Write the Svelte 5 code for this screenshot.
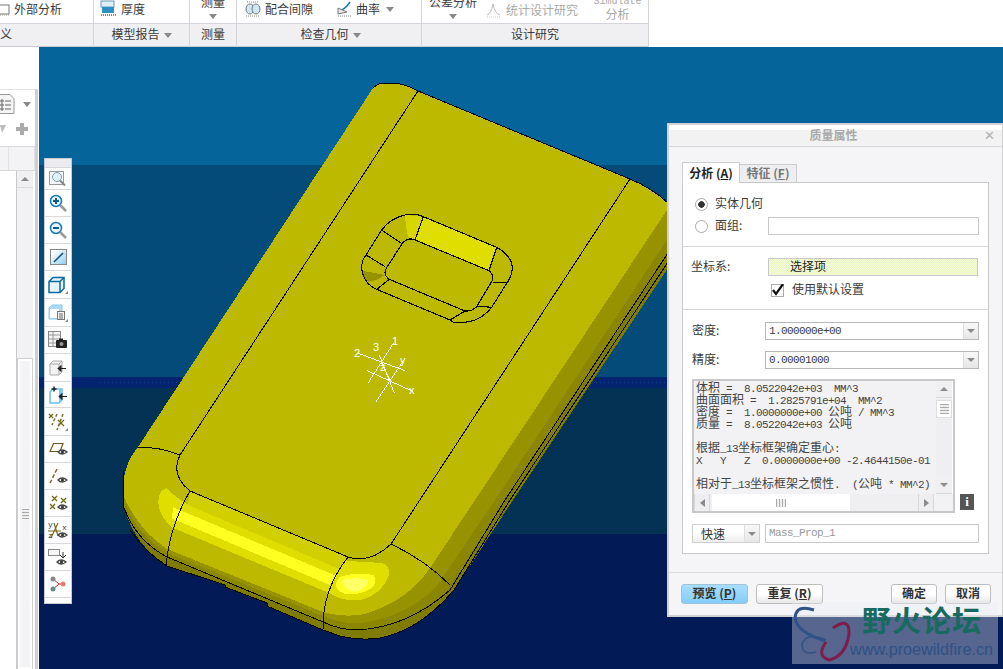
<script>
  // model outline pieces, in page coordinates (the svg viewBox starts at 39,47)
  const top = 'M373 88 Q378 83 385 83 L395 83 Q408 85 418 91 L630 179 Q652 188 668 203 L700 210';
  const back = 'L123 490 Q123 465 138 447 Z';

  const silhouette = `${top} L700 220 L513 500 L454 590 Q420 630 380 638 Q360 641 340 636 L323 630 L267 606 L267 603 L225 587 L225 585 L167 566 Q135 545 125 510 ${back}`;
  const shade1 = `${top} L700 203 L505 500 L448 590 Q410 625 358 630 Q340 630 323 622 L167 557 Q135 540 123 505 ${back}`;
  const shade2 = `${top} L700 190 L495 500 L437 586 Q405 618 360 623 Q340 624 323 616 L167 553 Q135 532 123 500 ${back}`;
  const face = `${top} L700 160 L432 565 Q410 600 365 614 Q345 618 323 612 L167 549 Q138 530 123 495 ${back}`;

  const edges = [
    'M373 88 Q378 83 385 83 L395 83 Q408 85 418 91 L630 179 Q652 188 668 203',
    'M418 91 L180 455 Q170 475 190 491 L348 557 Q370 564 391 544 L630 179',
    'M138 447 Q160 447 180 455',
    'M190 491 Q170 525 166 565',
    'M348 557 Q322 590 323 630',
    'M391 544 Q425 560 450 585',
    'M668 253 L505 500 L450 590 Q408 627 358 630 Q340 630 323 622 L167 557 Q135 540 123 505 L123 470',
    'M668 262 L510 500 L454 590 Q420 630 380 638 Q360 641 340 636 L323 630 L267 606 L267 603 L225 587 L225 585 L167 566 Q145 552 130 530'
  ];

  const results = [
    [['cn', '体积'], ['la', ' =  8.0522042e+03  MM^3']],
    [['cn', '曲面面积'], ['la', ' =  1.2825791e+04  MM^2']],
    [['cn', '密度'], ['la', ' =  1.0000000e+00 '], ['cn', '公吨'], ['la', ' / MM^3']],
    [['cn', '质量'], ['la', ' =  8.0522042e+03 '], ['cn', '公吨']],
    [],
    [['cn', '根据'], ['la', '_13'], ['cn', '坐标框架确定重心'], ['la', ':']],
    [['la', 'X   Y   Z  0.0000000e+00 -2.4644150e-01']],
    [],
    [['cn', '相对于'], ['la', '_13'], ['cn', '坐标框架之惯性'], ['la', '.  ('], ['cn', '公吨'], ['la', ' * MM^2)']]
  ];
</script>

<div class="app">
  <header class="ribbon">
    <div class="group">
      <div class="tools g1">
        <svg class="ic" width="12" height="16" viewBox="0 0 12 16"><rect x="-3" y="4" width="12" height="9" fill="#fff" stroke="#777"/><path d="M0 14h10" stroke="#999" stroke-dasharray="1 1"/></svg>
        <span>外部分析</span>
      </div>
      <div class="label left">义</div>
    </div>
    <div class="group">
      <div class="tools g2">
        <svg class="ic" width="17" height="18" viewBox="0 0 17 18"><rect x="1" y="1" width="13" height="6" fill="#dff0fb" stroke="#6a9ac0"/><rect x="2" y="7" width="12" height="6" fill="#2f8fc8"/><path d="M1 15h15" stroke="#888" stroke-dasharray="1 1" stroke-width="2"/></svg>
        <span>厚度</span>
      </div>
      <div class="label">模型报告<i class="caret"></i></div>
    </div>
    <div class="group">
      <div class="tools stack"><span class="cut">测量</span><i class="caret"></i></div>
      <div class="label">测量</div>
    </div>
    <div class="group">
      <div class="tools g4">
        <svg class="ic" width="16" height="18" viewBox="0 0 16 18"><ellipse cx="5" cy="9" rx="4" ry="5" fill="#cfe8f8" stroke="#777"/><ellipse cx="11" cy="9" rx="4" ry="5" fill="#cfe8f8" stroke="#777"/><path d="M2 2h12M1 16h14" stroke="#888" stroke-dasharray="1 1"/></svg>
        <span>配合间隙</span>
        <svg class="ic second" width="16" height="18" viewBox="0 0 16 18"><path d="M1 11Q8 10 13 2" fill="none" stroke="#1c7fb8" stroke-width="1.5"/><path d="M1 8l9 4-9 2z" fill="#e8e8e8" stroke="#777"/><path d="M1 16h14" stroke="#888" stroke-dasharray="1 1"/></svg>
        <span>曲率</span><i class="caret gap"></i>
      </div>
      <div class="label shifted">检查几何<i class="caret"></i></div>
    </div>
    <div class="group last">
      <div class="tools g5">
        <div class="stack tol"><span class="cut">公差分析</span><i class="caret"></i></div>
        <svg class="ic stat" width="15" height="18" viewBox="0 0 15 18"><path d="M1 14Q5 13 7 3Q9 13 14 14" fill="none" stroke="#bbb"/><path d="M1 16h14" stroke="#ccc" stroke-dasharray="1 1"/></svg>
        <span class="off">统计设计研究</span>
        <div class="stack sim off"><span class="cut-latin">Simulate</span><span>分析</span></div>
      </div>
      <div class="label">设计研究</div>
    </div>
  </header>

  <div class="main">
    <aside class="side">
      <div class="side-panel">
        <div class="side-icons">
          <div class="side-row">
            <svg width="15" height="21" viewBox="0 0 15 21"><path d="M-3 .5h13l4 4v15h-17z" fill="#f4f4f4" stroke="#999"/><path d="M5 7h6M5 11h6M5 15h6" stroke="#666"/><circle cx="2" cy="7" r="1.2" fill="#fff" stroke="#555"/><circle cx="2" cy="11" r="1.2" fill="#fff" stroke="#555"/><circle cx="2" cy="15" r="1.2" fill="#fff" stroke="#555"/></svg>
            <i class="caret"></i>
          </div>
          <div class="side-row second">
            <svg width="6" height="8" viewBox="0 0 6 8"><path d="M0 0h6L2 8z" fill="#bbb"/></svg>
            <svg width="12" height="12" viewBox="0 0 12 12"><path d="M4 0h4v4h4v4H8v4H4V8H0V4h4z" fill="#aaa"/></svg>
          </div>
        </div>
        <div class="side-tabs"><span></span><span></span></div>
        <div class="side-tree">
          <div class="side-scroll">
            <div class="sb-btn"><i class="tri up"></i></div>
            <div class="side-track"></div>
            <div class="side-thumb"><i></i></div>
          </div>
        </div>
      </div>
    </aside>

    <section class="view">
      <div class="band b1"></div>
      <div class="band b2"></div>
      <div class="band b3"></div>
      <div class="band b4"></div>
      <div class="band b5"></div>

      <svg class="model" viewBox="39 47 964 622" width="964" height="622" shape-rendering="crispEdges">
        <defs>
          <g id="eye"><path d="M0 3Q4 -1 9 3Q4 7 0 3Z" fill="#fff" stroke="#444" stroke-width="1.2"/><circle cx="4.5" cy="3" r="1.5" fill="#333"/></g>
        </defs>
        <path d="M100 382H667" stroke="#1c3f8c" stroke-dasharray="1 3"/>
        <path d={silhouette} fill="#7f7b00"/>
        <path d={shade1} fill="#8a8600"/>
        <path d={shade2} fill="#979300"/>
        <path d={face} fill="#bdb900"/>

        <g transform="translate(110 440) scale(.33333)">
          <path d="M240 155L715 352L700 400L230 210Z" fill="#d2cf00"/>
          <path d="M170 145Q145 150 145 190Q150 230 185 262L660 460Q700 488 760 478Q820 458 838 400Q838 368 800 368L700 362L690 388L240 198Q200 175 170 145Z" fill="#e0de00"/>
          <path d="M190 202L680 408L660 435L185 235Z" fill="#ffff22"/>
          <path d="M690 410Q740 395 790 405Q805 420 785 445Q740 470 700 460Q670 445 680 425Z" fill="#ffff22"/>
          <path d="M695 420Q740 410 775 420Q775 445 735 455Q700 450 695 420Z" fill="#ffff66"/>
        </g>

        {#each edges as d}
          <path {d} fill="none" stroke="#000" stroke-width="1"/>
        {/each}

        <g transform="translate(340 200) scale(.33333)">
          <path d="M250 50L470 142L447 212L225 120Z" fill="#e0de00"/>
          <path d="M195 45L250 50L225 120L205 112L198 80Z" fill="#d8d500"/>
          <path d="M65 212L135 225L110 240L85 245L70 232Z" fill="#979300"/>
          <g fill="none" stroke="#000" stroke-width="3.4">
            <path d="M195 45Q230 40 250 50L470 142Q515 165 517 205Q515 230 500 250L455 322Q420 365 370 367L340 367L330 360L110 268Q70 250 65 205Q65 180 78 165L125 90Q150 55 195 45Z"/>
            <path d="M205 118Q215 115 225 120L447 212Q462 225 458 240L410 320Q395 335 375 333L148 238Q130 225 137 208L187 130Q195 120 205 118Z"/>
            <path d="M250 50L225 120M470 142L447 212M500 247L458 247M455 322L410 318M375 333L330 360M148 238L110 268M78 165L135 200M125 90L185 130"/>
          </g>
          <g fill="none" stroke="#fff" stroke-width="3">
            <path d="M160 430L85 548M55 460L195 512M118 465L163 580M195 475L108 605M82 512L220 575M125 490L150 540"/>
          </g>
        </g>
        <g class="tag" shape-rendering="auto">
          <text x="392" y="345">1</text>
          <text x="354" y="357">2</text>
          <text x="373" y="351">3</text>
          <text x="400" y="364">y</text>
          <text x="409" y="394">x</text>
          <text x="380" y="371">z</text>
        </g>
      </svg>

      <nav class="toolbar">
        <div class="cell">
          <svg width="18" height="17" viewBox="0 0 18 17"><rect x=".5" y="1.5" width="14" height="13" fill="#f2f6fa" stroke="#999"/><circle cx="8" cy="7" r="4.5" fill="#e0f2fb" stroke="#7f9fb0"/><path d="M11 10.500l5 5" stroke="#888" stroke-width="2"/></svg>
        </div>
        <div class="cell">
          <svg width="18" height="18" viewBox="0 0 18 18"><circle cx="7" cy="7" r="5.500" fill="#e8f5fc" stroke="#1279b5" stroke-width="1.500"/><path d="M4 7h6M7 4v6" stroke="#0a5a90" stroke-width="2"/><path d="M11 11l6 6" stroke="#999" stroke-width="2.500"/></svg>
        </div>
        <div class="cell">
          <svg width="18" height="18" viewBox="0 0 18 18"><circle cx="7" cy="7" r="5.500" fill="#e8f5fc" stroke="#1279b5" stroke-width="1.500"/><path d="M4 7h6" stroke="#0a5a90" stroke-width="2"/><path d="M11 11l6 6" stroke="#999" stroke-width="2.500"/></svg>
        </div>
        <div class="cell">
          <svg width="17" height="16" viewBox="0 0 17 16"><defs><linearGradient id="fit" x1="0" y1="0" x2="1" y2="1"><stop offset=".15" stop-color="#fff"/><stop offset="1" stop-color="#8ccbf2"/></linearGradient></defs><rect x=".5" y=".5" width="16" height="15" fill="url(#fit)" stroke="#888"/><path d="M4 13L13 4" stroke="#124f7c" stroke-width="1.500"/></svg>
        </div>
        <div class="cell">
          <svg width="20" height="18" viewBox="0 0 20 18"><path d="M1 5.500L5 1.500H16V12.500L12 16.500H1Z" fill="#e6f4fc" stroke="#0a6aa0" stroke-width="1.500"/><path d="M1 5.500H12V16.500M12 5.500L16 1.500" fill="none" stroke="#0a6aa0" stroke-width="1.500"/><path d="M20 15v3h-3z" fill="#888"/></svg>
        </div>
        <div class="cell">
          <svg width="20" height="18" viewBox="0 0 20 18"><path d="M1 4L4 1H14V12L11 15H1Z" fill="#a8dcfa" stroke="#8cc8ee"/><rect x="2" y="5" width="9" height="9" fill="#fff"/><rect x="9.500" y="7.500" width="7" height="8" fill="#f6f6f6" stroke="#777"/><path d="M11 10h4M11 12h4M11 14h4" stroke="#666"/><path d="M20 15v3h-3z" fill="#888"/></svg>
        </div>
        <div class="cell">
          <svg width="20" height="18" viewBox="0 0 20 18"><rect x=".5" y=".5" width="12" height="15" fill="#f3f3f3" stroke="#888"/><path d="M1 4h11M1 8h11M1 12h11M5 1v14" stroke="#999"/><rect x="8" y="9" width="11" height="8" rx="1" fill="#222"/><rect x="11" y="7.500" width="4" height="2" fill="#222"/><circle cx="13.500" cy="13" r="2" fill="#999"/></svg>
        </div>
        <div class="cell">
          <svg width="18" height="16" viewBox="0 0 18 16"><path d="M1 4L4 1H13V12L10 15H1Z" fill="#f2f2f2" stroke="#aaa"/><path d="M1 4H10V15M10 4L13 1" fill="none" stroke="#aaa"/><path d="M9 8.500h8M9 8.500l3-3v6z" stroke="#222" fill="#222"/></svg>
        </div>
        <div class="cell">
          <svg width="18" height="18" viewBox="0 0 18 18"><path d="M1 6L4 3H13V14L10 17H1Z" fill="#fff" stroke="#6cbdf0" stroke-width="1.500"/><path d="M10 3H13V14L10 17Z" fill="#7cc8f4"/><path d="M5 .5v5M2.500 3h5" stroke="#222" stroke-width="1.500"/><path d="M10 10.500h8M10 10.500l3-3v6z" stroke="#222" fill="#222"/></svg>
        </div>
        <div class="cell">
          <svg width="20" height="18" viewBox="0 0 20 18"><path d="M1 1l4 4M5 1l-4 4M10 7l6 6M16 7l-6 6" stroke="#6d6a10" stroke-width="1.200"/><path d="M9 1l-5 11M15 1L9 17" stroke="#7a6a30" stroke-width="1.500" stroke-dasharray="3 2"/><path d="M20 15v3h-3z" fill="#888"/></svg>
        </div>
        <div class="cell">
          <svg width="19" height="14" viewBox="0 0 19 14"><path d="M1 9.500L4.500 1.500H14L11 9.500Z" fill="#fbfbf6" stroke="#6b5a20" stroke-width="1.200"/><use href="#eye" x="9" y="7"/></svg>
        </div>
        <div class="cell">
          <svg width="19" height="16" viewBox="0 0 19 16"><path d="M8 1L1 15" stroke="#7a6a30" stroke-width="1.500" stroke-dasharray="4 2"/><use href="#eye" x="9" y="9"/></svg>
        </div>
        <div class="cell">
          <svg width="19" height="16" viewBox="0 0 19 16"><path d="M3 1l5 5M8 1L3 6M1 9l5 5M6 9l-5 5M12 3l5 5M17 3l-5 5" stroke="#6d6a10" stroke-width="1.200"/><use href="#eye" x="9" y="9"/></svg>
        </div>
        <div class="cell">
          <svg width="20" height="18" viewBox="0 0 20 18"><path d="M0 10h13M3 17L10 2M6 2l4 13" stroke="#7a6a20" stroke-width="1.200"/><text class="axis" x="0" y="6">y</text><text class="axis" x="0" y="17">z</text><text class="axis" x="14" y="9">x</text><use href="#eye" x="10" y="11"/></svg>
        </div>
        <div class="cell">
          <svg width="20" height="16" viewBox="0 0 20 16"><rect x=".5" y=".5" width="11" height="6" fill="#f6f6f6" stroke="#888"/><path d="M15 3v5M12 6l3 3 3-3" fill="none" stroke="#333"/><use href="#eye" x="9" y="10"/></svg>
        </div>
        <div class="cell">
          <svg width="16" height="16" viewBox="0 0 16 16"><path d="M3 3l6 5-6 5M9 8h5" fill="none" stroke="#b33"/><circle cx="3" cy="3" r="2.500" fill="#888"/><circle cx="3" cy="13" r="2.500" fill="#6a8a8a"/><circle cx="13" cy="8" r="2.500" fill="#f07878"/></svg>
        </div>
      </nav>

      <div class="dialog">
        <div class="title"><span>质量属性</span><b>✕</b></div>
        <div class="body">
          <div class="tabs">
            <div class="tab active">分析 (<u>A</u>)</div>
            <div class="tab">特征 (<u>F</u>)</div>
          </div>
          <div class="panel">
            <div class="sec one">
              <div class="radio-row">
                <i class="radio on"></i><span>实体几何</span>
              </div>
              <div class="radio-row">
                <i class="radio"></i><span>面组:</span><div class="input"></div>
              </div>
            </div>
            <div class="sec two">
              <div class="field-row">
                <span>坐标系:</span>
                <div class="input pick">选择项</div>
              </div>
              <div class="check-row">
                <svg width="13" height="13" viewBox="0 0 13 13"><rect x=".5" y=".5" width="12" height="12" fill="#fff" stroke="#aaa"/><path d="M2 6l3 4L12 0" fill="none" stroke="#111" stroke-width="2.200"/></svg>
                <span>使用默认设置</span>
              </div>
            </div>
            <div class="sec three">
              <div class="field-row select-row">
                <span>密度:</span>
                <div class="input select"><span class="la">1.000000e+00</span><div class="drop"><i class="tri down"></i></div></div>
              </div>
              <div class="field-row select-row next">
                <span>精度:</span>
                <div class="input select"><span class="la">0.00001000</span><div class="drop"><i class="tri down"></i></div></div>
              </div>
              <div class="result-row">
                <div class="results">
                  <div class="output">
                    {#each results as line}
                      <div class="line">{#each line as part}<span class={part[0]}>{part[1]}</span>{/each}</div>
                    {/each}
                  </div>
                  <div class="vbar">
                    <div class="sb-btn"><i class="tri up"></i></div>
                    <div class="vthumb"><i></i></div>
                    <div class="grow"></div>
                    <div class="sb-btn"><i class="tri down"></i></div>
                  </div>
                  <div class="hbar">
                    <div class="hbtn"><i class="tri left"></i></div>
                    <div class="hthumb"><i></i></div>
                    <div class="grow"></div>
                    <div class="hbtn"><i class="tri right"></i></div>
                  </div>
                </div>
                <div class="info">i</div>
              </div>
              <div class="name-row">
                <div class="combo"><span>快速</span><div class="drop"><i class="tri down"></i></div></div>
                <div class="input name la">Mass_Prop_1</div>
              </div>
            </div>
          </div>
        </div>
        <div class="footer">
          <button class="primary">预览 (<u>P</u>)</button>
          <button>重复 (<u>R</u>)</button>
          <div class="grow"></div>
          <button class="small">确定</button>
          <button class="small">取消</button>
        </div>
      </div>

      <div class="mark">
        <svg class="bfly" width="62" height="62" viewBox="0 0 62 62" fill="none">
          <path d="M22 8Q4 2 3 16Q5 30 33 39" stroke="#2f5288" stroke-width="3"/>
          <path d="M41 26Q58 14 57 32Q54 54 37 58Q24 54 34 40" stroke="#7e1c4c" stroke-width="3"/>
          <path d="M34 38Q14 30 10 42Q10 54 24 50" stroke="#2f5288" stroke-width="1.500"/>
        </svg>
        <div class="mark-text">
          <div class="mark-cn">野火论坛</div>
          <div class="mark-url">www.proewildfire.cn</div>
        </div>
      </div>
    </section>
  </div>
</div>

<style>
  :global(body) {
    margin: 0;
    background: #fff;
  }
  .app {
    width: 1003px;
    height: 669px;
    overflow: hidden;
    display: flex;
    flex-direction: column;
    font: 12px/14px "Noto Sans CJK SC", sans-serif;
    color: #3a3a3a;
  }
  .grow { flex: 1; }
  .la, .cn { white-space: pre; }
  .la { font: 11px/12px "Liberation Mono", monospace; letter-spacing: -0.6px; }
  .cn { font: 12px/12px "Noto Sans CJK SC", sans-serif; }

  /* ribbon */
  .ribbon {
    display: grid;
    grid-template-columns: 94px 96px 47px 185px 227px;
    height: 47px;
    flex: none;
    background: #fff;
    overflow: hidden;
  }
  .group {
    display: flex;
    flex-direction: column;
    border-right: 1px solid #d4d4da;
  }
  .tools {
    height: 24px;
    display: flex;
    align-items: center;
    border-bottom: 1px solid #d4d4da;
    box-sizing: border-box;
    padding-bottom: 5px;
  }
  .label {
    height: 22px;
    background: #f0f0f3;
    border-bottom: 1px solid #c8c8ce;
    text-align: center;
    line-height: 20px;
  }
  .label.left { text-align: left; }
  .label.shifted { padding-left: 3px; }
  .g1 { gap: 2px; }
  .g2 { padding-left: 6px; gap: 4px; }
  .g4 { padding-left: 8px; }
  .g4 .ic { margin-right: 4px; }
  .g4 .second { margin-left: 24px; margin-right: 3px; }
  .g5 { padding-left: 8px; padding-bottom: 0; }
  .g5 > span { margin-top: -4px; }
  .g5 > .ic { margin-top: -4px; }
  .stack {
    display: flex;
    flex-direction: column;
    align-items: center;
    height: 24px;
    box-sizing: border-box;
    padding-bottom: 2px;
  }
  .cut, .cut-latin { margin-top: -5px; height: 14px; white-space: nowrap; flex: none; }
  .stack .caret { margin: 5px 0 0; }
  .tol { width: 46px; flex: none; }
  .stat { margin: 0 5px 0 10px; }
  .off { color: #a8a8a8; }
  .sim { margin-left: 15px; width: 49px; line-height: 12px; flex: none; }
  .cut-latin { margin-top: -4px; height: 12px; font: 10px/12px "Liberation Mono", monospace; }
  .caret {
    display: inline-block;
    width: 0;
    height: 0;
    border: 4px solid transparent;
    border-top: 5px solid #888;
    border-bottom: 0;
    vertical-align: middle;
    margin-left: 4px;
  }
  .caret.gap { margin-left: 6px; }

  .main {
    flex: 1;
    display: flex;
    min-height: 0;
  }

  /* left tree panel */
  .side {
    width: 39px;
    flex: none;
    background: #fff;
    padding-top: 42px;
    box-sizing: border-box;
    display: flex;
  }
  .side-panel {
    width: 38px;
    box-sizing: border-box;
    border-top: 1px solid #e0e0e0;
    border-right: 3px solid #cfcfd2;
    display: flex;
    flex-direction: column;
  }
  .side-icons {
    height: 56px;
    border-bottom: 1px solid #d8d8d8;
  }
  .side-row {
    display: flex;
    justify-content: space-between;
    align-items: center;
    height: 26px;
    padding: 3px 4px 0 0;
    box-sizing: border-box;
  }
  .side-row.second { padding: 0 7px 0 0; height: 26px; }
  .side-tabs {
    height: 23px;
    background: #f3f3f5;
    border-bottom: 1px solid #d8d8d8;
    display: flex;
  }
  .side-tabs span { width: 8px; border-right: 1px solid #e2e2e2; }
  .side-tabs span + span { width: 25px; }
  .side-tree {
    flex: 1;
    min-height: 0;
    padding-left: 16px;
    padding-right: 2px;
  }
  .side-scroll {
    height: 100%;
    border-left: 1px solid #c8c8c8;
    background: #f2f2f4;
    display: flex;
    flex-direction: column;
  }
  .side-track { height: 171px; flex: none; }
  .side-thumb {
    flex: 1;
    margin: 0 1px;
    background: #f4f4f6;
    border: 2px solid #fff;
    outline: 1px solid #cfcfd2;
    display: flex;
    align-items: center;
    justify-content: center;
  }
  .side-thumb i {
    width: 7px;
    height: 10px;
    background: repeating-linear-gradient(#aaa 0 1px, #eee 1px 3px);
  }
  .sb-btn {
    height: 16px;
    flex: none;
    background: #f0f0f2;
    border-bottom: 1px solid #d8d8d8;
    display: flex;
    align-items: center;
    justify-content: center;
  }
  .tri {
    display: block;
    width: 0;
    height: 0;
    border: 4px solid transparent;
  }
  .tri.up { border-top: 0; border-bottom: 4px solid #8a8a8a; }
  .tri.down { border-bottom: 0; border-top: 4px solid #8a8a8a; }
  .tri.left { border-left: 0; border-right: 5px solid #8a8a8a; }
  .tri.right { border-right: 0; border-left: 5px solid #8a8a8a; }

  /* graphics area */
  .view {
    flex: 1;
    position: relative;
    display: flex;
    flex-direction: column;
    overflow: hidden;
  }
  .band { flex: none; }
  .b1 { height: 118px; background: #05649a; }
  .b2 { height: 212px; background: #044b79; }
  .b3 { height: 11px; background: #03246f; }
  .b4 { height: 146px; background: #033254; }
  .b5 { flex: 1; background: #021a56; }
  .model {
    position: absolute;
    left: 0;
    top: 0;
  }
  .tag text {
    font: 11px "Liberation Sans", sans-serif;
    fill: #fff;
  }

  /* floating view toolbar */
  .toolbar {
    position: absolute;
    left: 5px;
    top: 111px;
    width: 28px;
    height: 446px;
    box-sizing: border-box;
    background: #fdfdfd;
    border: 1px solid #c9c9d2;
    padding: 8px 0 5px;
    display: grid;
    grid-template-rows: 23px 27px 27px 27px 28px 28px 27px 28px 26px 28px 27px 27px 27px 27px 27px 27px;
    background-image: linear-gradient(#ececf0 0 8px, transparent 8px);
  }
  .cell {
    display: flex;
    align-items: center;
    justify-content: center;
    border-bottom: 1px solid #d8d8dc;
    box-sizing: border-box;
    background: #fefefe;
  }
  .cell:first-child { border-top: 1px solid #d8d8dc; }
  .axis {
    font: 8px "Liberation Mono", monospace;
    fill: #333;
  }

  /* mass properties dialog */
  .dialog {
    position: absolute;
    left: 628px;
    top: 76px;
    width: 336px;
    height: 494px;
    box-sizing: border-box;
    background: #f5f5f7;
    border: 2px solid #d2d2d2;
    border-right-width: 1px;
    display: flex;
    flex-direction: column;
  }
  .title {
    flex: none;
    background: linear-gradient(#fff 0 5px, #f2f2f2 5px);
    border-bottom: 1px solid #d8d8d8;
    position: relative;
    text-align: center;
    font-weight: 700;
    color: #a9a9a9;
    line-height: 20px;
    padding-right: 4px;
    box-sizing: border-box;
    height: 22px;
  }
  .title b {
    position: absolute;
    right: 7px;
    top: 0;
    color: #b0b0b0;
    font: 700 13px/22px "DejaVu Sans", sans-serif;
  }
  .body { padding: 15px 13px 0; }
  .tabs {
    display: flex;
    align-items: flex-end;
    height: 20px;
  }
  .tab {
    width: 58px;
    height: 18px;
    box-sizing: border-box;
    border: 1px solid #ccc;
    border-bottom: 0;
    background: #eeeef0;
    font-weight: 700;
    text-align: center;
    line-height: 16px;
    color: #777;
    margin-left: -1px;
  }
  .tab.active {
    margin-left: 0;
    height: 21px;
    margin-bottom: -1px;
    background: #fff;
    color: #222;
    position: relative;
    line-height: 19px;
  }
  .panel {
    height: 372px;
    box-sizing: border-box;
    background: #fff;
    border: 1px solid #c8c8c8;
  }
  .sec { border-bottom: 1px solid #d8d8d8; box-sizing: border-box; }
  .sec.one { height: 64px; padding-top: 10px; }
  .sec.two { height: 63px; padding-top: 11px; }
  .sec.three { border-bottom: 0; padding: 12px 9px 0; }
  .radio-row {
    height: 22px;
    display: flex;
    align-items: center;
    padding-left: 12px;
  }
  .radio {
    width: 13px;
    height: 13px;
    box-sizing: border-box;
    border: 1px solid #aaa;
    border-radius: 50%;
    background: #fff;
    margin-right: 7px;
    flex: none;
  }
  .radio.on { background: radial-gradient(circle, #333 0 3px, #fff 3.5px); }
  .radio-row span { width: 53px; margin-top: -2px; }
  .input {
    height: 18px;
    box-sizing: border-box;
    border: 1px solid #c8c8c8;
    background: #fff;
  }
  .radio-row .input { width: 211px; }
  .field-row {
    display: flex;
    align-items: center;
    padding-left: 8px;
  }
  .field-row > span { width: 77px; margin-top: -2px; }
  .pick {
    width: 210px;
    padding-left: 21px;
    line-height: 14px;
    color: #222;
    background: repeating-conic-gradient(#e8f6bc 0 25%, #f8fce0 0 50%) 0 0 / 2px 2px;
  }
  .check-row {
    display: flex;
    align-items: center;
    gap: 8px;
    margin: 8px 0 0 88px;
  }
  .check-row span { margin-top: -3px; }
  .select-row { padding-left: 0; }
  .select-row > span { width: 73px; }
  .select {
    width: 214px;
    display: flex;
    align-items: center;
    justify-content: space-between;
    padding-left: 3px;
    border-color: #b8b8b8;
  }
  .next { margin-top: 11px; }
  .drop {
    width: 14px;
    height: 100%;
    background: linear-gradient(#f8f8f8, #e6e6e6);
    border-left: 1px solid #ddd;
    display: flex;
    align-items: center;
    justify-content: center;
    flex: none;
  }
  .result-row {
    display: flex;
    align-items: flex-end;
    margin-top: 10px;
    gap: 5px;
  }
  .results {
    width: 263px;
    height: 134px;
    box-sizing: border-box;
    border: 2px solid #c8c8c8;
    background: #f2f2f4;
    display: grid;
    grid-template-columns: 242px 17px;
    grid-template-rows: 113px 17px;
  }
  .output {
    padding: 0 0 0 2px;
    overflow: hidden;
    color: #444;
  }
  .line {
    height: 12px;
    line-height: 12px;
    white-space: pre;
  }
  .vbar {
    display: flex;
    flex-direction: column;
    background: #efeff1;
    border-right: 1px solid #fff;
  }
  .vthumb {
    margin-top: 2px;
    height: 18px;
    background: #fff;
    border: 1px solid #ddd;
    box-sizing: border-box;
    display: flex;
    align-items: center;
    justify-content: center;
    flex: none;
  }
  .vthumb i {
    width: 9px;
    height: 10px;
    background: repeating-linear-gradient(#aaa 0 1px, #eee 1px 3px);
  }
  .hbar {
    display: flex;
    background: #efeff1;
    margin-right: 2px;
  }
  .hbtn {
    width: 16px;
    display: flex;
    align-items: center;
    justify-content: center;
    background: #eeeef0;
    border-right: 1px solid #d8d8d8;
    border-left: 1px solid #d8d8d8;
    box-sizing: border-box;
    flex: none;
  }
  .hthumb {
    width: 138px;
    margin-left: 2px;
    background: #fff;
    display: flex;
    justify-content: center;
    align-items: center;
    box-sizing: border-box;
    flex: none;
  }
  .hthumb i {
    width: 10px;
    height: 8px;
    background: repeating-linear-gradient(90deg, #aaa 0 1px, #eee 1px 3px);
  }
  .info {
    width: 14px;
    height: 16px;
    background: #555;
    color: #fff;
    font: 700 13px/16px "Liberation Serif", serif;
    text-align: center;
    margin-bottom: 3px;
  }
  .name-row {
    display: flex;
    gap: 5px;
    margin-top: 11px;
    height: 19px;
  }
  .combo {
    width: 68px;
    box-sizing: border-box;
    border: 1px solid #d0d0d0;
    background: linear-gradient(#fff 0 40%, #eee);
    display: flex;
    justify-content: space-between;
    align-items: center;
    padding-left: 8px;
    color: #333;
  }
  .name {
    width: 214px;
    height: 19px;
    padding-left: 3px;
    line-height: 17px;
    color: #999;
  }
  .footer {
    margin-top: 18px;
    border-top: 1px solid #dcdcdc;
    padding: 11px 11px 0 12px;
    display: flex;
    gap: 8px;
  }
  button {
    width: 67px;
    height: 20px;
    padding: 0 0 3px;
    box-sizing: border-box;
    border: 1px solid #bdbdbd;
    border-radius: 3px;
    background: linear-gradient(#fff 0 50%, #e6e6e6);
    font: 700 12px/14px "Noto Sans CJK SC", sans-serif;
    color: #333;
  }
  button.small { width: 46px; }
  button.primary {
    background: linear-gradient(#a8deff, #84ccf8);
    border-color: #9cc4dc;
  }

  /* forum watermark */
  .mark {
    position: absolute;
    left: 753px;
    top: 555px;
    width: 206px;
    height: 62px;
    background: rgba(235, 238, 245, 0.36);
    display: flex;
    overflow: hidden;
  }
  .bfly { flex: none; }
  .mark-text { margin-left: 7px; flex: none; }
  .mark-cn {
    font: 700 29px/30px "Noto Sans CJK SC", sans-serif;
    color: #176a60;
    letter-spacing: 1px;
    margin: 2px 0 0 1px;
  }
  .mark-url {
    position: relative;
    margin-left: -11px;
    margin-top: 5px;
    font: 16.200px/20px "Liberation Sans", sans-serif;
    color: #2f5186;
    white-space: nowrap;
  }
</style>
